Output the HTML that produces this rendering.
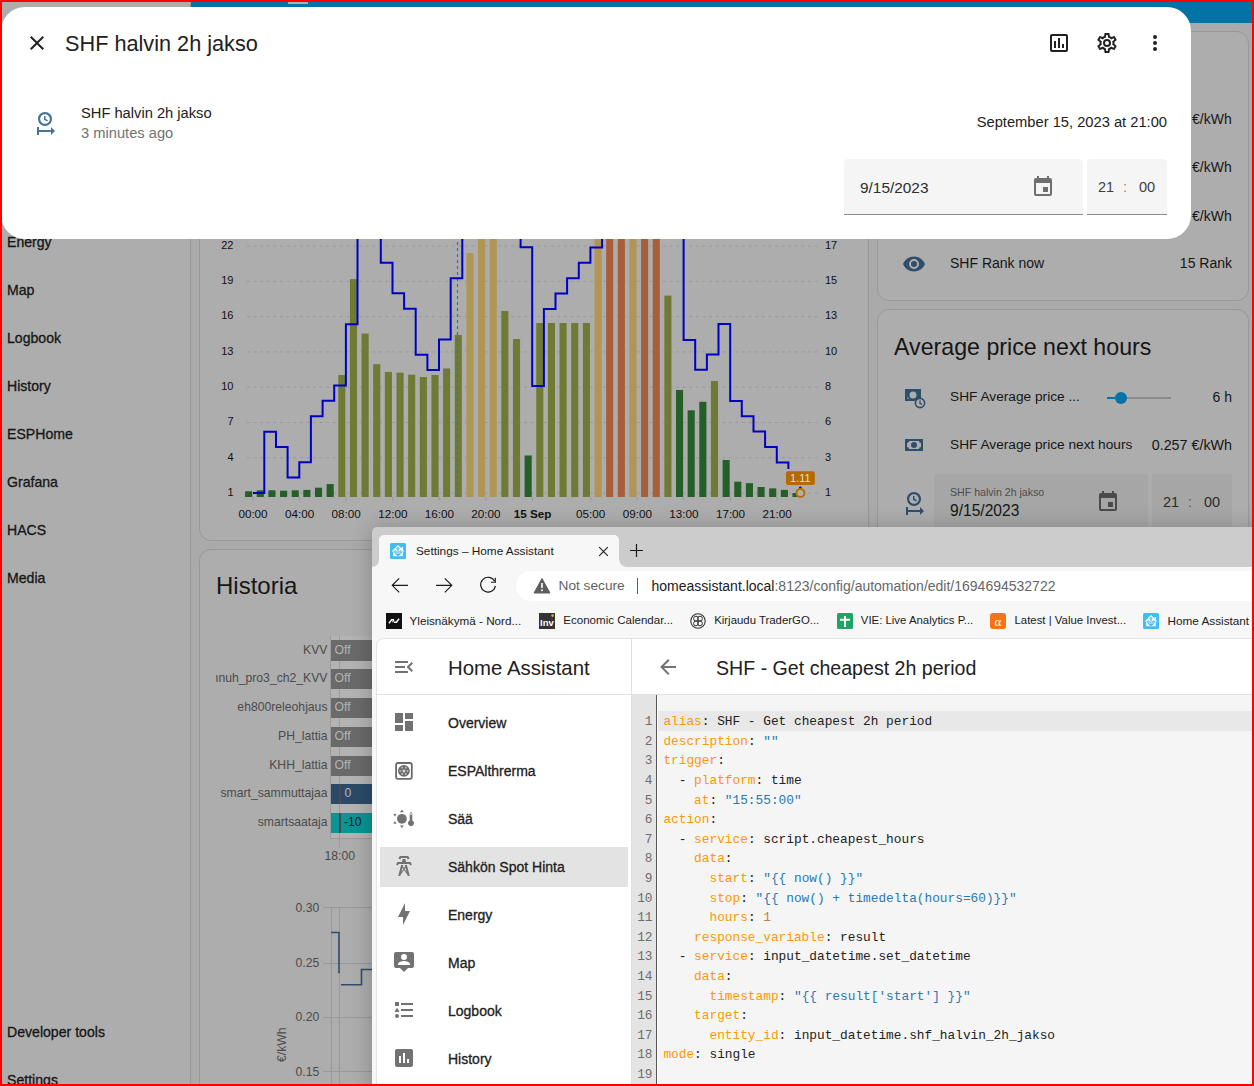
<!DOCTYPE html>
<html><head><meta charset="utf-8">
<style>
*{box-sizing:border-box}
html,body{margin:0;padding:0}
body{width:1254px;height:1086px;overflow:hidden;position:relative;background:#aaaaaa;font-family:"Liberation Sans",sans-serif;color:#161616}
.a{position:absolute}
.t{position:absolute;white-space:nowrap;line-height:1}
svg{display:block}
</style></head><body>
<!-- background HA (scrimmed colors) -->
<div class="a" style="left:0;top:0;width:1254px;height:1086px;background:#aaaaaa"></div>
<div class="a" style="left:0;top:0;width:190px;height:1086px;background:#adadad"></div>
<div class="a" style="left:190px;top:0;width:1px;height:1086px;background:#989898"></div>
<div class="a" style="left:191px;top:0;width:1063px;height:23px;background:#0273a6"></div>
<div class="a" style="left:288px;top:0;width:20px;height:4px;background:#9fb3bf"></div>
<!-- sidebar labels -->
<div class="t" style="left:7px;top:235px;font-size:14.1px;font-weight:400;-webkit-text-stroke:0.3px #161616">Energy</div>
<div class="t" style="left:7px;top:283px;font-size:14.1px;-webkit-text-stroke:0.3px #161616">Map</div>
<div class="t" style="left:7px;top:331px;font-size:14.1px;-webkit-text-stroke:0.3px #161616">Logbook</div>
<div class="t" style="left:7px;top:379px;font-size:14.1px;-webkit-text-stroke:0.3px #161616">History</div>
<div class="t" style="left:7px;top:427px;font-size:14.1px;-webkit-text-stroke:0.3px #161616">ESPHome</div>
<div class="t" style="left:7px;top:475px;font-size:14.1px;-webkit-text-stroke:0.3px #161616">Grafana</div>
<div class="t" style="left:7px;top:523px;font-size:14.1px;-webkit-text-stroke:0.3px #161616">HACS</div>
<div class="t" style="left:7px;top:571px;font-size:14.1px;-webkit-text-stroke:0.3px #161616">Media</div>
<div class="t" style="left:7px;top:1025px;font-size:14.1px;-webkit-text-stroke:0.3px #161616">Developer tools</div>
<div class="t" style="left:7px;top:1073px;font-size:14.1px;-webkit-text-stroke:0.3px #161616">Settings</div>
<!-- cards -->
<div class="a" style="left:199.4px;top:31px;width:669.6px;height:510px;border:1px solid #989898;border-radius:12px;background:#adadad"></div>
<div class="a" style="left:877px;top:31px;width:372px;height:270px;border:1px solid #989898;border-radius:12px;background:#adadad"></div>
<div class="a" style="left:877px;top:309px;width:372px;height:400px;border:1px solid #989898;border-radius:12px;background:#adadad"></div>
<div class="a" style="left:199.4px;top:549px;width:669.6px;height:700px;border:1px solid #989898;border-radius:12px;background:#adadad"></div>
<!-- right card rows -->
<div class="t" style="left:1192px;top:112.3px;font-size:14px">€/kWh</div>
<div class="t" style="left:1192px;top:160.3px;font-size:14px">€/kWh</div>
<div class="t" style="left:1192px;top:208.5px;font-size:14px">€/kWh</div>
<svg class="a" style="left:902px;top:252px" width="24" height="24" viewBox="0 0 24 24"><path fill="#2e4e6b" d="M12,9A3,3 0 0,0 9,12A3,3 0 0,0 12,15A3,3 0 0,0 15,12A3,3 0 0,0 12,9M12,17A5,5 0 0,1 7,12A5,5 0 0,1 12,7A5,5 0 0,1 17,12A5,5 0 0,1 12,17M12,4.5C7,4.5 2.73,7.61 1,12C2.73,16.39 7,19.5 12,19.5C17,19.5 21.27,16.39 23,12C21.27,7.61 17,4.5 12,4.5Z"/></svg>
<div class="t" style="left:950px;top:256px;font-size:14px">SHF Rank now</div>
<div class="t" style="right:22px;top:256px;font-size:14px">15 Rank</div>
<div class="t" style="left:894px;top:336px;font-size:23.2px">Average price next hours</div>
<!-- avg price rows -->
<svg class="a" style="left:902px;top:385px" width="24" height="24" viewBox="0 0 24 24"><path fill="#2e4e6b" d="M3,4H19V13.2A6.5,6.5 0 0,0 13.3,16H3V4M11,6.5A3.5,3.5 0 0,0 7.5,10A3.5,3.5 0 0,0 11,13.5A3.5,3.5 0 0,0 14.5,10A3.5,3.5 0 0,0 11,6.5M5.5,6V14H7.2A5,5 0 0,1 5.5,10.5V6Z"/><circle cx="18" cy="18" r="4.6" fill="none" stroke="#2e4e6b" stroke-width="1.6"/><path d="M18,15.5V18.3L19.8,19.4" stroke="#2e4e6b" stroke-width="1.3" fill="none"/></svg>
<div class="t" style="left:950px;top:390px;font-size:13.7px">SHF Average price ...</div>
<div class="a" style="left:1107px;top:396.5px;width:64px;height:2px;background:#8c8c8c"></div>
<div class="a" style="left:1107px;top:396.5px;width:14px;height:2px;background:#0273a6"></div>
<div class="a" style="left:1115px;top:391.5px;width:12px;height:12px;border-radius:6px;background:#0273a6"></div>
<div class="t" style="right:22px;top:390px;font-size:14px">6 h</div>
<svg class="a" style="left:902px;top:433px" width="24" height="24" viewBox="0 0 24 24"><path fill="#2e4e6b" fill-rule="evenodd" d="M3,6H21V18H3V6M12,9A3,3 0 0,1 15,12A3,3 0 0,1 12,15A3,3 0 0,1 9,12A3,3 0 0,1 12,9M7,8A2,2 0 0,1 5,10V14A2,2 0 0,1 7,16H17A2,2 0 0,1 19,14V10A2,2 0 0,1 17,8H7Z"/></svg>
<div class="t" style="left:950px;top:438px;font-size:13.7px">SHF Average price next hours</div>
<div class="t" style="right:22px;top:438px;font-size:14.3px">0.257 €/kWh</div>
<svg class="a" style="left:902px;top:490.5px" width="24" height="24" viewBox="0 0 24 24"><path fill="#2e4e6b" d="M12,1C8.14,1 5,4.14 5,8A7,7 0 0,0 12,15C15.86,15 19,11.87 19,8C19,4.14 15.86,1 12,1M12,3.15C14.67,3.15 16.850,5.32 16.85,8C16.85,10.68 14.67,12.85 12,12.85A4.85,4.85 0 0,1 7.15,8A4.85,4.85 0 0,1 12,3.15M11,5V8.69L14.19,10.53L14.94,9.23L12.5,7.82V5M4,16V24H6V21H18V24L22,20L18,16V19H6V16"/></svg>
<div class="a" style="left:934px;top:474px;width:213.5px;height:60px;background:#a6a6a6;border-radius:4px 4px 0 0"></div>
<div class="t" style="left:950px;top:487px;font-size:10.6px;color:#4d4d4d">SHF halvin 2h jakso</div>
<div class="t" style="left:950px;top:502.5px;font-size:15.6px;color:#161616">9/15/2023</div>
<svg class="a" style="left:1096px;top:490px" width="24" height="24" viewBox="0 0 24 24"><path fill="#4b4b4b" d="M19,19H5V8H19M16,1V3H8V1H6V3H5C3.89,3 3,3.89 3,5V19A2,2 0 0,0 5,21H19A2,2 0 0,0 21,19V5C21,3.89 20.1,3 19,3H18V1M17,12H12V17H17V12Z"/></svg>
<div class="a" style="left:1152px;top:474px;width:80px;height:60px;background:#a6a6a6;border-radius:4px 4px 0 0"></div>
<div class="t" style="left:1163px;top:494.5px;font-size:14.5px;color:#2b2b2b">21</div>
<div class="t" style="left:1188px;top:494.5px;font-size:14.5px;color:#5e5e5e">:</div>
<div class="t" style="left:1204px;top:494.5px;font-size:14.5px;color:#2b2b2b">00</div>
<svg class="a" style="left:200px;top:230px" width="680" height="310" viewBox="200 230 680 310">
<line x1="247" y1="246.0" x2="818" y2="246.0" stroke="#999" stroke-width="1" stroke-dasharray="3,3.6"/>
<line x1="247" y1="281.3" x2="818" y2="281.3" stroke="#999" stroke-width="1" stroke-dasharray="3,3.6"/>
<line x1="247" y1="316.6" x2="818" y2="316.6" stroke="#999" stroke-width="1" stroke-dasharray="3,3.6"/>
<line x1="247" y1="351.9" x2="818" y2="351.9" stroke="#999" stroke-width="1" stroke-dasharray="3,3.6"/>
<line x1="247" y1="387.2" x2="818" y2="387.2" stroke="#999" stroke-width="1" stroke-dasharray="3,3.6"/>
<line x1="247" y1="422.5" x2="818" y2="422.5" stroke="#999" stroke-width="1" stroke-dasharray="3,3.6"/>
<line x1="247" y1="457.8" x2="818" y2="457.8" stroke="#999" stroke-width="1" stroke-dasharray="3,3.6"/>
<line x1="247" y1="493.2" x2="818" y2="493.2" stroke="#999" stroke-width="1" stroke-dasharray="3,3.6"/>
<line x1="253.0" y1="497" x2="253.0" y2="501" stroke="#999" stroke-width="1"/>
<line x1="299.6" y1="497" x2="299.6" y2="501" stroke="#999" stroke-width="1"/>
<line x1="346.2" y1="497" x2="346.2" y2="501" stroke="#999" stroke-width="1"/>
<line x1="392.8" y1="497" x2="392.8" y2="501" stroke="#999" stroke-width="1"/>
<line x1="439.3" y1="497" x2="439.3" y2="501" stroke="#999" stroke-width="1"/>
<line x1="485.9" y1="497" x2="485.9" y2="501" stroke="#999" stroke-width="1"/>
<line x1="532.5" y1="497" x2="532.5" y2="501" stroke="#999" stroke-width="1"/>
<line x1="590.7" y1="497" x2="590.7" y2="501" stroke="#999" stroke-width="1"/>
<line x1="637.3" y1="497" x2="637.3" y2="501" stroke="#999" stroke-width="1"/>
<line x1="683.9" y1="497" x2="683.9" y2="501" stroke="#999" stroke-width="1"/>
<line x1="730.5" y1="497" x2="730.5" y2="501" stroke="#999" stroke-width="1"/>
<line x1="777.1" y1="497" x2="777.1" y2="501" stroke="#999" stroke-width="1"/>
<rect x="245.10" y="491.3" width="7.1" height="5.7" fill="#235f27"/>
<rect x="256.75" y="490.3" width="7.1" height="6.7" fill="#235f27"/>
<rect x="268.39" y="490.3" width="7.1" height="6.7" fill="#235f27"/>
<rect x="280.04" y="490.7" width="7.1" height="6.3" fill="#235f27"/>
<rect x="291.68" y="490.3" width="7.1" height="6.7" fill="#235f27"/>
<rect x="303.33" y="489.9" width="7.1" height="7.1" fill="#235f27"/>
<rect x="314.98" y="487.7" width="7.1" height="9.3" fill="#235f27"/>
<rect x="326.62" y="484.1" width="7.1" height="12.9" fill="#235f27"/>
<rect x="338.27" y="375" width="7.1" height="122.0" fill="#6f7a34"/>
<rect x="349.91" y="279.1" width="7.1" height="217.9" fill="#6f7a34"/>
<rect x="361.56" y="333.6" width="7.1" height="163.4" fill="#6f7a34"/>
<rect x="373.21" y="364.2" width="7.1" height="132.8" fill="#6f7a34"/>
<rect x="384.85" y="371.9" width="7.1" height="125.1" fill="#6f7a34"/>
<rect x="396.50" y="372.7" width="7.1" height="124.3" fill="#6f7a34"/>
<rect x="408.14" y="374.7" width="7.1" height="122.3" fill="#6f7a34"/>
<rect x="419.79" y="377" width="7.1" height="120.0" fill="#6f7a34"/>
<rect x="431.44" y="375" width="7.1" height="122.0" fill="#6f7a34"/>
<rect x="443.08" y="368.5" width="7.1" height="128.5" fill="#6f7a34"/>
<rect x="454.73" y="335" width="7.1" height="162.0" fill="#6f7a34"/>
<rect x="466.37" y="253" width="7.1" height="244.0" fill="#b09655"/>
<rect x="478.02" y="200" width="7.1" height="297.0" fill="#b09655"/>
<rect x="489.67" y="200" width="7.1" height="297.0" fill="#b09655"/>
<rect x="501.31" y="311" width="7.1" height="186.0" fill="#6f7a34"/>
<rect x="512.96" y="339" width="7.1" height="158.0" fill="#6f7a34"/>
<rect x="524.60" y="455.5" width="7.1" height="41.5" fill="#235f27"/>
<rect x="536.25" y="323" width="7.1" height="174.0" fill="#6f7a34"/>
<rect x="547.90" y="323" width="7.1" height="174.0" fill="#6f7a34"/>
<rect x="559.54" y="323" width="7.1" height="174.0" fill="#6f7a34"/>
<rect x="571.19" y="323" width="7.1" height="174.0" fill="#6f7a34"/>
<rect x="582.83" y="323" width="7.1" height="174.0" fill="#6f7a34"/>
<rect x="594.48" y="200" width="7.1" height="297.0" fill="#b09655"/>
<rect x="606.13" y="200" width="7.1" height="297.0" fill="#a65f39"/>
<rect x="617.77" y="200" width="7.1" height="297.0" fill="#a65f39"/>
<rect x="629.42" y="200" width="7.1" height="297.0" fill="#b09655"/>
<rect x="641.06" y="200" width="7.1" height="297.0" fill="#a65f39"/>
<rect x="652.71" y="200" width="7.1" height="297.0" fill="#a65f39"/>
<rect x="664.36" y="295.6" width="7.1" height="201.4" fill="#6f7a34"/>
<rect x="676.00" y="390" width="7.1" height="107.0" fill="#235f27"/>
<rect x="687.65" y="410.3" width="7.1" height="86.7" fill="#235f27"/>
<rect x="699.29" y="401.8" width="7.1" height="95.2" fill="#235f27"/>
<rect x="710.94" y="381" width="7.1" height="116.0" fill="#6f7a34"/>
<rect x="722.59" y="460" width="7.1" height="37.0" fill="#235f27"/>
<rect x="734.23" y="481.7" width="7.1" height="15.3" fill="#235f27"/>
<rect x="745.88" y="483.2" width="7.1" height="13.8" fill="#235f27"/>
<rect x="757.52" y="487" width="7.1" height="10.0" fill="#235f27"/>
<rect x="769.17" y="488.4" width="7.1" height="8.6" fill="#235f27"/>
<rect x="780.82" y="489.9" width="7.1" height="7.1" fill="#235f27"/>
<rect x="792.46" y="493" width="7.1" height="4.0" fill="#235f27"/>
<line x1="457.5" y1="236" x2="457.5" y2="497" stroke="#1482aa" stroke-width="1.2" stroke-dasharray="3,3"/>
<path d="M253,493.1 H264.3 V431.8 H276.0 V446.9 H287.6 V477.5 H299.3 V462.3 H310.9 V416.3 H322.6 V400.8 H334.2 V385.5 H345.9 V324.2 H357.5 V200 H369.2 V200 H380.8 V262.7 H392.5 V293.2 H404.1 V308.7 H415.7 V354.7 H427.4 V369.9 H439.0 V339.4 H450.7 V278.2 H462.3 V200 H474.0 V200 H485.6 V200 H497.3 V200 H508.9 V200 H520.6 V247.3 H532.2 V385.9 H543.9 V309.1 H555.5 V293.6 H567.1 V278.2 H578.8 V262.7 H590.4 V247.5 H602.1 V200 H613.7 V200 H625.4 V200 H637.0 V200 H648.7 V200 H660.3 V200 H672.0 V200 H683.6 V339.9 H695.2 V369.8 H706.9 V354.6 H718.5 V324.1 H730.2 V400.9 H741.8 V416.3 H753.5 V431.5 H765.1 V447.0 H776.8 V462.6 H788.4 V469" fill="none" stroke="#0000c3" stroke-width="2" stroke-linejoin="miter"/>
<circle cx="800.3" cy="487.6" r="1.2" fill="#0000c3"/>
<circle cx="800.4" cy="493" r="4" fill="#b0b0b0" stroke="#b86e00" stroke-width="2"/>
<rect x="786" y="471.2" width="28.8" height="13.8" rx="2" fill="#b36b00"/>
<text x="800.4" y="482.3" font-size="11" fill="#dedede" text-anchor="middle" font-family="Liberation Sans">1.11</text>
<text x="233.5" y="248.7" font-size="11" fill="#111" text-anchor="end" font-family="Liberation Sans">22</text>
<text x="825" y="248.7" font-size="11" fill="#111" font-family="Liberation Sans">17</text>
<text x="233.5" y="284.0" font-size="11" fill="#111" text-anchor="end" font-family="Liberation Sans">19</text>
<text x="825" y="284.0" font-size="11" fill="#111" font-family="Liberation Sans">15</text>
<text x="233.5" y="319.3" font-size="11" fill="#111" text-anchor="end" font-family="Liberation Sans">16</text>
<text x="825" y="319.3" font-size="11" fill="#111" font-family="Liberation Sans">13</text>
<text x="233.5" y="354.6" font-size="11" fill="#111" text-anchor="end" font-family="Liberation Sans">13</text>
<text x="825" y="354.6" font-size="11" fill="#111" font-family="Liberation Sans">10</text>
<text x="233.5" y="389.9" font-size="11" fill="#111" text-anchor="end" font-family="Liberation Sans">10</text>
<text x="825" y="389.9" font-size="11" fill="#111" font-family="Liberation Sans">8</text>
<text x="233.5" y="425.2" font-size="11" fill="#111" text-anchor="end" font-family="Liberation Sans">7</text>
<text x="825" y="425.2" font-size="11" fill="#111" font-family="Liberation Sans">6</text>
<text x="233.5" y="460.5" font-size="11" fill="#111" text-anchor="end" font-family="Liberation Sans">4</text>
<text x="825" y="460.5" font-size="11" fill="#111" font-family="Liberation Sans">3</text>
<text x="233.5" y="495.9" font-size="11" fill="#111" text-anchor="end" font-family="Liberation Sans">1</text>
<text x="825" y="495.9" font-size="11" fill="#111" font-family="Liberation Sans">1</text>
<text x="253.0" y="518.1" font-size="11.7" fill="#111" text-anchor="middle" font-family="Liberation Sans">00:00</text>
<text x="299.6" y="518.1" font-size="11.7" fill="#111" text-anchor="middle" font-family="Liberation Sans">04:00</text>
<text x="346.2" y="518.1" font-size="11.7" fill="#111" text-anchor="middle" font-family="Liberation Sans">08:00</text>
<text x="392.8" y="518.1" font-size="11.7" fill="#111" text-anchor="middle" font-family="Liberation Sans">12:00</text>
<text x="439.3" y="518.1" font-size="11.7" fill="#111" text-anchor="middle" font-family="Liberation Sans">16:00</text>
<text x="485.9" y="518.1" font-size="11.7" fill="#111" text-anchor="middle" font-family="Liberation Sans">20:00</text>
<text x="532.5" y="518.1" font-size="11.7" font-weight="bold" fill="#111" text-anchor="middle" font-family="Liberation Sans">15 Sep</text>
<text x="590.7" y="518.1" font-size="11.7" fill="#111" text-anchor="middle" font-family="Liberation Sans">05:00</text>
<text x="637.3" y="518.1" font-size="11.7" fill="#111" text-anchor="middle" font-family="Liberation Sans">09:00</text>
<text x="683.9" y="518.1" font-size="11.7" fill="#111" text-anchor="middle" font-family="Liberation Sans">13:00</text>
<text x="730.5" y="518.1" font-size="11.7" fill="#111" text-anchor="middle" font-family="Liberation Sans">17:00</text>
<text x="777.1" y="518.1" font-size="11.7" fill="#111" text-anchor="middle" font-family="Liberation Sans">21:00</text>
</svg><div class="t" style="left:216px;top:574px;font-size:24px;color:#161616">Historia</div>
<div class="a" style="left:331px;top:636px;width:45px;height:202px;background:#b3b3b3"></div>
<div class="a" style="left:339px;top:636px;width:1px;height:212px;background:#9c9c9c"></div>
<div class="a" style="left:331px;top:640.3px;width:45px;height:20.4px;background:#6a6a6a"></div>
<div class="t" style="right:926.5px;top:643.5px;font-size:12.2px;color:#4b4b4b">KVV</div>
<div class="t" style="left:334.5px;top:643.5px;font-size:12.2px;color:#b4b4b4">Off</div>
<div class="a" style="left:331px;top:669.1px;width:45px;height:20.4px;background:#6a6a6a"></div>
<div class="a" style="left:216px;top:668px;width:111.5px;height:20px;overflow:hidden"><div class="t" style="right:0;top:4.3px;font-size:12.2px;color:#4b4b4b">jannuh_pro3_ch2_KVV</div></div>
<div class="t" style="left:334.5px;top:672.3px;font-size:12.2px;color:#b4b4b4">Off</div>
<div class="a" style="left:331px;top:697.9px;width:45px;height:20.4px;background:#6a6a6a"></div>
<div class="t" style="right:926.5px;top:701.1px;font-size:12.2px;color:#4b4b4b">eh800releohjaus</div>
<div class="t" style="left:334.5px;top:701.1px;font-size:12.2px;color:#b4b4b4">Off</div>
<div class="a" style="left:331px;top:726.7px;width:45px;height:20.4px;background:#6a6a6a"></div>
<div class="t" style="right:926.5px;top:729.9px;font-size:12.2px;color:#4b4b4b">PH_lattia</div>
<div class="t" style="left:334.5px;top:729.9px;font-size:12.2px;color:#b4b4b4">Off</div>
<div class="a" style="left:331px;top:755.5px;width:45px;height:20.4px;background:#6a6a6a"></div>
<div class="t" style="right:926.5px;top:758.7px;font-size:12.2px;color:#4b4b4b">KHH_lattia</div>
<div class="t" style="left:334.5px;top:758.7px;font-size:12.2px;color:#b4b4b4">Off</div>
<div class="a" style="left:331px;top:784.1px;width:45px;height:20.4px;background:#2b4a6a"></div>
<div class="t" style="right:926.5px;top:787.3px;font-size:12.2px;color:#4b4b4b">smart_sammuttajaa</div>
<div class="a" style="left:338.5px;top:784.1px;width:2px;height:20.4px;background:#4a4a4a"></div>
<div class="t" style="left:344.5px;top:787.3px;font-size:12.2px;color:#b4b4b4">0</div>
<div class="a" style="left:331px;top:813.0px;width:45px;height:20.4px;background:#079595"></div>
<div class="t" style="right:926.5px;top:816.2px;font-size:12.2px;color:#4b4b4b">smartsaataja</div>
<div class="a" style="left:338.5px;top:813.0px;width:2px;height:20.4px;background:#4a4a4a"></div>
<div class="t" style="left:344px;top:816.2px;font-size:12.2px;color:#161616">-10</div>
<div class="a" style="left:330px;top:636px;width:1px;height:202px;background:#9a9a9a"></div>

<div class="a" style="left:330px;top:837.5px;width:46px;height:1px;background:#9a9a9a"></div>
<div class="t" style="left:324.5px;top:850px;font-size:12.2px;color:#4b4b4b">18:00</div>
<div class="a" style="left:322.6px;top:907px;width:50px;height:1px;background:#999"></div>
<div class="t" style="right:934.7px;top:901.8px;font-size:12.2px;color:#4b4b4b">0.30</div>
<div class="a" style="left:322.6px;top:962.5px;width:50px;height:1px;background:#999"></div>
<div class="t" style="right:934.7px;top:957.3px;font-size:12.2px;color:#4b4b4b">0.25</div>
<div class="a" style="left:322.6px;top:1016.5px;width:50px;height:1px;background:#999"></div>
<div class="t" style="right:934.7px;top:1011.3px;font-size:12.2px;color:#4b4b4b">0.20</div>
<div class="a" style="left:322.6px;top:1071px;width:50px;height:1px;background:#999"></div>
<div class="t" style="right:934.7px;top:1065.8px;font-size:12.2px;color:#4b4b4b">0.15</div>
<div class="a" style="left:330.5px;top:907px;width:1px;height:180px;background:#999"></div>
<div class="a" style="left:339px;top:907px;width:1px;height:180px;background:#999"></div>
<svg class="a" style="left:320px;top:900px" width="60" height="100" viewBox="320 900 60 100"><path d="M331,932.5 H339 V973.3 M341,984.8 H361.5 V969.5 H376" fill="none" stroke="#2e4e6b" stroke-width="1.6"/></svg>
<div class="t" style="left:260.5px;top:1035px;font-size:12.2px;color:#4b4b4b;transform:rotate(-90deg);transform-origin:21px 6px">€/kWh</div>

<!-- dialog -->
<div class="a" style="left:1px;top:7px;width:1190px;height:232px;background:#fff;border-radius:24px"></div>
<svg class="a" style="left:25px;top:31px" width="24" height="24" viewBox="0 0 24 24"><path fill="#212121" d="M19,6.41L17.59,5L12,10.59L6.41,5L5,6.41L10.59,12L5,17.59L6.41,19L12,13.41L17.59,19L19,17.59L13.41,12L19,6.41Z"/></svg>
<div class="t" style="left:65px;top:33px;font-size:21.7px;color:#212121">SHF halvin 2h jakso</div>
<svg class="a" style="left:1047px;top:31px" width="24" height="24" viewBox="0 0 24 24"><path fill="#212121" d="M9 17H7V10H9V17M13 17H11V7H13V17M17 17H15V13H17V17M19 19H5V5H19V19.1M19 3H5C3.9 3 3 3.9 3 5V19C3 20.1 3.9 21 5 21H19C20.1 21 21 20.1 21 19V5C21 3.9 20.1 3 19 3Z"/></svg>
<svg class="a" style="left:1095px;top:31px" width="24" height="24" viewBox="0 0 24 24"><path fill="#212121" d="M12,8A4,4 0 0,1 16,12A4,4 0 0,1 12,16A4,4 0 0,1 8,12A4,4 0 0,1 12,8M12,10A2,2 0 0,0 10,12A2,2 0 0,0 12,14A2,2 0 0,0 14,12A2,2 0 0,0 12,10M10,22C9.75,22 9.54,21.82 9.5,21.58L9.13,18.93C8.5,18.68 7.96,18.34 7.44,17.94L4.95,18.95C4.73,19.03 4.46,18.95 4.34,18.73L2.34,15.27C2.21,15.05 2.27,14.78 2.46,14.63L4.57,12.97L4.5,12L4.57,11L2.460,9.37C2.27,9.22 2.21,8.95 2.34,8.73L4.34,5.27C4.46,5.05 4.73,4.96 4.95,5.05L7.44,6.05C7.96,5.66 8.5,5.32 9.13,5.07L9.5,2.42C9.54,2.18 9.75,2 10,2H14C14.25,2 14.46,2.18 14.5,2.42L14.87,5.07C15.5,5.32 16.04,5.66 16.56,6.05L19.05,5.05C19.27,4.96 19.54,5.05 19.66,5.27L21.66,8.73C21.79,8.95 21.73,9.22 21.54,9.37L19.43,11L19.5,12L19.43,13L21.54,14.63C21.73,14.78 21.79,15.05 21.66,15.27L19.66,18.73C19.54,18.95 19.27,19.04 19.05,18.95L16.56,17.95C16.04,18.34 15.5,18.68 14.87,18.93L14.5,21.58C14.46,21.82 14.25,22 14,22H10M11.25,4L10.88,6.61C9.68,6.86 8.62,7.5 7.85,8.39L5.44,7.35L4.69,8.65L6.8,10.2C6.4,11.37 6.4,12.64 6.8,13.8L4.68,15.36L5.43,16.66L7.86,15.62C8.63,16.5 9.68,17.14 10.87,17.38L11.24,20H12.76L13.13,17.39C14.32,17.14 15.37,16.5 16.140,15.62L18.57,16.66L19.32,15.36L17.2,13.81C17.6,12.64 17.6,11.37 17.2,10.2L19.31,8.65L18.56,7.35L16.15,8.39C15.38,7.5 14.32,6.86 13.12,6.62L12.75,4H11.25Z"/></svg>
<svg class="a" style="left:1143px;top:31px" width="24" height="24" viewBox="0 0 24 24"><path fill="#212121" d="M12,16A2,2 0 0,1 14,18A2,2 0 0,1 12,20A2,2 0 0,1 10,18A2,2 0 0,1 12,16M12,10A2,2 0 0,1 14,12A2,2 0 0,1 12,14A2,2 0 0,1 10,12A2,2 0 0,1 12,10M12,4A2,2 0 0,1 14,6A2,2 0 0,1 12,8A2,2 0 0,1 10,6A2,2 0 0,1 12,4Z"/></svg>
<svg class="a" style="left:33px;top:111px" width="24" height="24" viewBox="0 0 24 24"><path fill="#44739e" d="M12,1C8.14,1 5,4.14 5,8A7,7 0 0,0 12,15C15.86,15 19,11.87 19,8C19,4.14 15.86,1 12,1M12,3.15C14.67,3.15 16.85,5.32 16.85,8C16.85,10.68 14.67,12.85 12,12.85A4.85,4.85 0 0,1 7.15,8A4.85,4.85 0 0,1 12,3.15M11,5V8.69L14.19,10.53L14.94,9.23L12.5,7.820V5M4,16V24H6V21H18V24L22,20L18,16V19H6V16"/></svg>
<div class="t" style="left:81px;top:106px;font-size:14.7px;color:#212121">SHF halvin 2h jakso</div>
<div class="t" style="left:81px;top:126px;font-size:14.7px;color:#727272">3 minutes ago</div>
<div class="t" style="right:87px;top:115px;font-size:14.7px;color:#212121">September 15, 2023 at 21:00</div>
<div class="a" style="left:844px;top:159px;width:239px;height:56px;background:#f5f5f5;border-radius:4px 4px 0 0;border-bottom:1px solid #8c8c8c"></div>
<div class="t" style="left:860px;top:179.5px;font-size:15.4px;color:#2e2e2e">9/15/2023</div>
<svg class="a" style="left:1031px;top:175px" width="24" height="24" viewBox="0 0 24 24"><path fill="#6f6f6f" d="M19,19H5V8H19M16,1V3H8V1H6V3H5C3.89,3 3,3.89 3,5V19A2,2 0 0,0 5,21H19A2,2 0 0,0 21,19V5C21,3.89 20.1,3 19,3H18V1M17,12H12V17H17V12Z"/></svg>
<div class="a" style="left:1087px;top:159px;width:80px;height:56px;background:#f5f5f5;border-radius:4px 4px 0 0;border-bottom:1px solid #8c8c8c"></div>
<div class="t" style="left:1098px;top:180px;font-size:14.5px;color:#404040">21</div>
<div class="t" style="left:1123px;top:180px;font-size:14.5px;color:#8a8a8a">:</div>
<div class="t" style="left:1139px;top:180px;font-size:14.5px;color:#404040">00</div>
<!-- browser window -->
<div class="a" style="left:372px;top:527px;width:890px;height:570px;background:#cccccc;border-radius:5px 0 0 0;overflow:hidden;box-shadow:0 2px 22px rgba(0,0,0,.24)">
</div>
<!-- active tab -->
<div class="a" style="left:379px;top:535px;width:240px;height:40px;background:#f7f7f7;border-radius:5px 5px 0 0"></div>
<div class="a" style="left:372px;top:558px;width:7px;height:9px;background:#f7f7f7"></div>
<div class="a" style="left:372px;top:558px;width:7px;height:8.5px;background:#cccccc;border-radius:0 0 7px 0"></div>
<div class="a" style="left:619px;top:558px;width:8px;height:9px;background:#f7f7f7"></div>
<div class="a" style="left:619px;top:558px;width:8px;height:8.5px;background:#cccccc;border-radius:0 0 0 8px"></div>
<!-- HA favicon -->
<svg class="a" style="left:390px;top:543px" width="16" height="16" viewBox="0 0 16 16"><rect width="16" height="16" rx="1.5" fill="#41bdf5"/><path d="M8,2 L11.6,5.6 V4 H13 V7 L14.4,8.5 H12.8 V13.2 H3.2 V8.5 H1.6 Z" fill="#fff"/><path d="M8,6.4 V13.2 M5.4,9.4 Q5.8,11.6 8,12.4 M10.6,9.4 Q10.2,11.6 8,12.4" stroke="#41bdf5" stroke-width="1.1" fill="none"/><circle cx="8" cy="5.6" r="1.15" fill="#9ad8f7" stroke="#41bdf5" stroke-width="0.8"/><circle cx="5.3" cy="8.8" r="1.15" fill="#9ad8f7" stroke="#41bdf5" stroke-width="0.8"/><circle cx="10.7" cy="8.8" r="1.15" fill="#9ad8f7" stroke="#41bdf5" stroke-width="0.8"/></svg>
<div class="t" style="left:416px;top:545.5px;font-size:11.8px;color:#1a1a1a">Settings – Home Assistant</div>
<svg class="a" style="left:597px;top:545px" width="13" height="13" viewBox="0 0 13 13"><path d="M2.2,2.2 L10.8,10.8 M10.8,2.2 L2.2,10.8" stroke="#1a1a1a" stroke-width="1.1"/></svg>
<svg class="a" style="left:629px;top:543px" width="15" height="15" viewBox="0 0 15 15"><path d="M7.5,1 V14 M1,7.5 H14" stroke="#1a1a1a" stroke-width="1.2"/></svg>
<!-- toolbar -->
<div class="a" style="left:372px;top:566.5px;width:890px;height:520px;background:#f7f7f7"></div>
<svg class="a" style="left:390px;top:575px" width="20" height="20" viewBox="0 0 20 20"><path d="M18,10.3 H2.6 M9.2,3.3 L2.2,10.3 L9.2,17.3" stroke="#1a1a1a" stroke-width="1.15" fill="none"/></svg>
<svg class="a" style="left:434px;top:575px" width="20" height="20" viewBox="0 0 20 20"><path d="M2,10.3 H17.4 M10.8,3.3 L17.8,10.3 L10.8,17.3" stroke="#1a1a1a" stroke-width="1.15" fill="none"/></svg>
<svg class="a" style="left:478px;top:575px" width="20" height="20" viewBox="0 0 20 20"><path d="M16.6,6.2 A7.4,7.4 0 1,0 17.4,10.8" stroke="#1a1a1a" stroke-width="1.15" fill="none"/><path d="M17.3,2.8 V7.2 H12.9" stroke="#1a1a1a" stroke-width="1.15" fill="none"/></svg>
<div class="a" style="left:516px;top:571px;width:760px;height:30px;background:#ffffff;border-radius:15px"></div>
<svg class="a" style="left:533px;top:577px" width="18" height="18" viewBox="0 0 18 18"><path d="M9,1.5 L17,16 H1 Z" fill="#5f5f5f" stroke="#5f5f5f" stroke-width="1" stroke-linejoin="round"/><path d="M9,6 V11" stroke="#fff" stroke-width="1.6"/><circle cx="9" cy="13.2" r="0.95" fill="#fff"/></svg>
<div class="t" style="left:558.5px;top:579px;font-size:13.7px;color:#5f5f5f">Not secure</div>
<div class="a" style="left:637px;top:578px;width:1px;height:16px;background:#5f5f5f"></div>
<div class="t" style="left:651.5px;top:579px;font-size:14px;color:#1a1a1a">homeassistant.local<span style="color:#666">:8123/config/automation/edit/1694694532722</span></div>
<!-- bookmarks -->
<svg class="a" style="left:386px;top:613px" width="16" height="16" viewBox="0 0 16 16"><rect width="16" height="16" fill="#111"/><path d="M3,10.2 L5.6,6.8 H8 M8,9.2 H10.4 L13,5.8" stroke="#fff" stroke-width="1.5" fill="none"/><path d="M8,6.8 L6.6,9.2" stroke="#fff" stroke-width="1.2"/></svg>
<div class="t" style="left:409.5px;top:614.5px;font-size:11.7px;color:#1a1a1a">Yleisnäkymä - Nord...</div>
<svg class="a" style="left:539px;top:613px" width="16" height="16" viewBox="0 0 16 16"><rect width="16" height="16" fill="#333"/><text x="1" y="12.5" font-size="9.5" font-weight="bold" fill="#fff" font-family="Liberation Sans">Inv</text><circle cx="13.6" cy="2.6" r="1.3" fill="#f5a623"/></svg>
<div class="t" style="left:563.3px;top:614.5px;font-size:11.55px;color:#1a1a1a">Economic Calendar...</div>
<svg class="a" style="left:690px;top:613px" width="16" height="16" viewBox="0 0 16 16"><circle cx="8" cy="8" r="7.2" stroke="#333" stroke-width="1.1" fill="none"/><circle cx="6" cy="5.6" r="2.4" stroke="#333" stroke-width="1" fill="none"/><circle cx="10" cy="5.6" r="2.4" stroke="#333" stroke-width="1" fill="none"/><circle cx="6" cy="10.4" r="2.4" stroke="#333" stroke-width="1" fill="none"/><circle cx="10" cy="10.4" r="2.4" stroke="#333" stroke-width="1" fill="none"/></svg>
<div class="t" style="left:714.2px;top:614.5px;font-size:11.4px;color:#1a1a1a">Kirjaudu TraderGO...</div>
<svg class="a" style="left:837px;top:613px" width="16" height="16" viewBox="0 0 16 16"><rect width="16" height="16" rx="1.5" fill="#1fa463"/><path d="M3,6.8 H13 M8,3 V14" stroke="#fff" stroke-width="2"/></svg>
<div class="t" style="left:860.8px;top:614.5px;font-size:11.4px;color:#1a1a1a">VIE: Live Analytics P...</div>
<svg class="a" style="left:990px;top:613px" width="16" height="16" viewBox="0 0 16 16"><rect width="16" height="16" rx="3" fill="#f97316"/><text x="8" y="12.8" font-size="13" fill="#fff" text-anchor="middle" font-family="Liberation Serif">α</text></svg>
<div class="t" style="left:1014.5px;top:614.5px;font-size:11.4px;color:#1a1a1a">Latest | Value Invest...</div>
<svg class="a" style="left:1143px;top:613px" width="16" height="16" viewBox="0 0 16 16"><rect width="16" height="16" rx="1.5" fill="#41bdf5"/><path d="M8,2 L11.6,5.6 V4 H13 V7 L14.4,8.5 H12.8 V13.2 H3.2 V8.5 H1.6 Z" fill="#fff"/><path d="M8,6.4 V13.2 M5.4,9.4 Q5.8,11.6 8,12.4 M10.6,9.4 Q10.2,11.6 8,12.4" stroke="#41bdf5" stroke-width="1.1" fill="none"/><circle cx="8" cy="5.6" r="1.15" fill="#9ad8f7" stroke="#41bdf5" stroke-width="0.8"/><circle cx="5.3" cy="8.8" r="1.15" fill="#9ad8f7" stroke="#41bdf5" stroke-width="0.8"/><circle cx="10.7" cy="8.8" r="1.15" fill="#9ad8f7" stroke="#41bdf5" stroke-width="0.8"/></svg>
<div class="t" style="left:1167.5px;top:614.5px;font-size:11.75px;color:#1a1a1a">Home Assistant</div>
<!-- page -->
<div class="a" style="left:375.5px;top:638px;width:900px;height:460px;background:#ffffff;border:1px solid #e3e3e3;border-radius:8px 0 0 0"></div>
<div class="a" style="left:376px;top:694px;width:878px;height:1px;background:#e0e0e0"></div>
<div class="a" style="left:631px;top:639px;width:1px;height:447px;background:#e0e0e0"></div>
<svg class="a" style="left:392px;top:655px" width="24" height="24" viewBox="0 0 24 24"><path fill="#727272"  d="M21,15.61L19.59,17L14.58,12L19.59,7L21,8.39L17.44,12L21,15.61M3,6H16V8H3V6M3,13V11H13V13H3M3,18V16H16V18H3Z"/></svg>
<div class="t" style="left:448px;top:657.5px;font-size:20.4px;color:#212121">Home Assistant</div>
<svg class="a" style="left:656px;top:655px" width="24" height="24" viewBox="0 0 24 24"><path fill="#727272"  d="M20,11V13H8L13.5,18.5L12.08,19.92L4.16,12L12.08,4.08L13.5,5.5L8,11H20Z"/></svg>
<div class="t" style="left:716px;top:659px;font-size:19.6px;color:#212121">SHF - Get cheapest 2h period</div>
<div class="a" style="left:380px;top:847px;width:248px;height:40px;background:#e3e3e3"></div>
<svg class="a" style="left:392px;top:710px" width="24" height="24" viewBox="0 0 24 24"><path fill="#727272"  d="M13,3V9H21V3M13,21H21V11H13M3,21H11V15H3M3,13H11V3H3V13Z"/></svg>
<div class="t" style="left:448px;top:716px;font-size:14px;color:#212121;-webkit-text-stroke:0.3px #212121">Overview</div>
<svg class="a" style="left:390px;top:756px" width="28" height="28" viewBox="390 756 28 28"><rect x="396.1" y="763" width="15.7" height="15.8" rx="1.8" fill="none" stroke="#6b6b6b" stroke-width="1.8"/><circle cx="403.9" cy="770.9" r="5.9" fill="#6b6b6b"/><circle cx="407.50" cy="770.90" r="0.95" fill="#c4c4c4"/><circle cx="405.70" cy="774.02" r="0.95" fill="#c4c4c4"/><circle cx="402.10" cy="774.02" r="0.95" fill="#c4c4c4"/><circle cx="400.30" cy="770.90" r="0.95" fill="#c4c4c4"/><circle cx="402.10" cy="767.78" r="0.95" fill="#c4c4c4"/><circle cx="405.70" cy="767.78" r="0.95" fill="#c4c4c4"/><circle cx="403.9" cy="770.9" r="1.5" fill="#e6e6e6" stroke="#8a8a8a" stroke-width="0.5"/></svg>
<div class="t" style="left:448px;top:764px;font-size:14px;color:#212121;-webkit-text-stroke:0.3px #212121">ESPAlthrerma</div>
<svg class="a" style="left:390px;top:804px" width="30" height="30" viewBox="390 804 30 30"><circle cx="401.9" cy="818.8" r="4.9" fill="#727272"/><path d="M401.9,809.6 L403.9,812.2 H399.9Z M401.9,828 L399.9,825.4 H403.9Z M393.3,814.1 L396.6,813.7 L395,816.6Z M393.3,823.5 L395,820.9 L396.6,823.9Z" fill="#727272"/><path d="M409.7,813.6 A1.3,1.3 0 0,1 412.3,813.6 V820.5 A3,3 0 1,1 409.7,820.5Z" fill="#727272"/><circle cx="411" cy="813.9" r="0.9" fill="#fff"/></svg>
<div class="t" style="left:448px;top:812px;font-size:14px;color:#212121;-webkit-text-stroke:0.3px #212121">Sää</div>
<svg class="a" style="left:392px;top:854px" width="24" height="24" viewBox="0 0 24 24"><path fill="#727272"  d="M8.28,5.45L6.5,4.55L7.76,2H16.24L17.5,4.55L15.72,5.44L15,4H9L8.28,5.45M18.62,8H14.09L13.3,5H10.7L9.910,8H5.38L4.1,10.55L5.89,11.44L6.62,10H17.38L18.1,11.45L19.89,10.56L18.62,8M17.77,22H15.7L15.46,21.1L12,15.9L8.53,21.1L8.3,22H6.23L9.12,11H11.19L10.83,12.35L12,14.1L13.16,12.35L12.81,11H14.88L17.77,22M11.4,15L10.5,13.65L9.32,18.13L11.4,15M14.68,18.12L13.5,13.64L12.6,15L14.68,18.12Z"/></svg>
<div class="t" style="left:448px;top:860px;font-size:14px;color:#212121;-webkit-text-stroke:0.3px #212121">Sähkön Spot Hinta</div>
<svg class="a" style="left:392px;top:902px" width="24" height="24" viewBox="0 0 24 24"><path fill="#727272"  d="M11 15H6L13 1V9H18L11 23V15Z"/></svg>
<div class="t" style="left:448px;top:908px;font-size:14px;color:#212121;-webkit-text-stroke:0.3px #212121">Energy</div>
<svg class="a" style="left:392px;top:950px" width="24" height="24" viewBox="0 0 24 24"><path fill="#727272" fill-rule="evenodd" d="M4,2H20A2,2 0 0,1 22,4V16A2,2 0 0,1 20,18H16L12,22L8,18H4A2,2 0 0,1 2,16V4A2,2 0 0,1 4,2M12,4A3,3 0 0,0 9,7A3,3 0 0,0 12,10A3,3 0 0,0 15,7A3,3 0 0,0 12,4M18,15V14C18,12 14,10.9 12,10.9C10,10.9 6,12 6,14V15H18Z"/></svg>
<div class="t" style="left:448px;top:956px;font-size:14px;color:#212121;-webkit-text-stroke:0.3px #212121">Map</div>
<svg class="a" style="left:392px;top:998px" width="24" height="24" viewBox="0 0 24 24"><path fill="#727272"  d="M5,9.5L7.5,14H2.5L5,9.5M3,4H7V8H3V4M5,20A2,2 0 0,0 7,18A2,2 0 0,0 5,16A2,2 0 0,0 3,18A2,2 0 0,0 5,20M9,5V7H21V5H9M9,19H21V17H9V19M9,13H21V11H9V13Z"/></svg>
<div class="t" style="left:448px;top:1004px;font-size:14px;color:#212121;-webkit-text-stroke:0.3px #212121">Logbook</div>
<svg class="a" style="left:392px;top:1046px" width="24" height="24" viewBox="0 0 24 24"><path fill="#727272" fill-rule="evenodd" d="M9 17H7V10H9V17M13 17H11V7H13V17M17 17H15V13H17V17M19 3H5C3.9 3 3 3.9 3 5V19C3 20.1 3.9 21 5 21H19C20.1 21 21 20.1 21 19V5C21 3.9 20.1 3 19 3Z"/></svg>
<div class="t" style="left:448px;top:1052px;font-size:14px;color:#212121;-webkit-text-stroke:0.3px #212121">History</div>
<div class="a" style="left:632px;top:695px;width:25px;height:391px;background:#e4e4e4"></div>
<div class="a" style="left:656px;top:695px;width:1.2px;height:391px;background:#555"></div>
<div class="a" style="left:657.5px;top:695px;width:600px;height:391px;background:#f5f5f5"></div>
<div class="a" style="left:657.5px;top:710.8px;width:600px;height:20px;background:#e8e8e8"></div>
<div class="t" style="right:601.5px;top:716.1px;font-family:'Liberation Mono',monospace;font-size:12.8px;color:#6d6d6d">1</div>
<div class="t" style="left:663.4px;top:716.1px;font-family:'Liberation Mono',monospace;font-size:12.8px;color:#222;white-space:pre"><span style="color:#ff9800">alias</span>: SHF - Get cheapest 2h period</div>
<div class="t" style="right:601.5px;top:735.7px;font-family:'Liberation Mono',monospace;font-size:12.8px;color:#6d6d6d">2</div>
<div class="t" style="left:663.4px;top:735.7px;font-family:'Liberation Mono',monospace;font-size:12.8px;color:#222;white-space:pre"><span style="color:#ff9800">description</span>: <span style="color:#2878b4">""</span></div>
<div class="t" style="right:601.5px;top:755.3px;font-family:'Liberation Mono',monospace;font-size:12.8px;color:#6d6d6d">3</div>
<div class="t" style="left:663.4px;top:755.3px;font-family:'Liberation Mono',monospace;font-size:12.8px;color:#222;white-space:pre"><span style="color:#ff9800">trigger</span>:</div>
<div class="t" style="right:601.5px;top:774.9px;font-family:'Liberation Mono',monospace;font-size:12.8px;color:#6d6d6d">4</div>
<div class="t" style="left:663.4px;top:774.9px;font-family:'Liberation Mono',monospace;font-size:12.8px;color:#222;white-space:pre">  - <span style="color:#ff9800">platform</span>: time</div>
<div class="t" style="right:601.5px;top:794.5px;font-family:'Liberation Mono',monospace;font-size:12.8px;color:#6d6d6d">5</div>
<div class="t" style="left:663.4px;top:794.5px;font-family:'Liberation Mono',monospace;font-size:12.8px;color:#222;white-space:pre">    <span style="color:#ff9800">at</span>: <span style="color:#2878b4">"15:55:00"</span></div>
<div class="t" style="right:601.5px;top:814.1px;font-family:'Liberation Mono',monospace;font-size:12.8px;color:#6d6d6d">6</div>
<div class="t" style="left:663.4px;top:814.1px;font-family:'Liberation Mono',monospace;font-size:12.8px;color:#222;white-space:pre"><span style="color:#ff9800">action</span>:</div>
<div class="t" style="right:601.5px;top:833.7px;font-family:'Liberation Mono',monospace;font-size:12.8px;color:#6d6d6d">7</div>
<div class="t" style="left:663.4px;top:833.7px;font-family:'Liberation Mono',monospace;font-size:12.8px;color:#222;white-space:pre">  - <span style="color:#ff9800">service</span>: script.cheapest_hours</div>
<div class="t" style="right:601.5px;top:853.3px;font-family:'Liberation Mono',monospace;font-size:12.8px;color:#6d6d6d">8</div>
<div class="t" style="left:663.4px;top:853.3px;font-family:'Liberation Mono',monospace;font-size:12.8px;color:#222;white-space:pre">    <span style="color:#ff9800">data</span>:</div>
<div class="t" style="right:601.5px;top:872.9px;font-family:'Liberation Mono',monospace;font-size:12.8px;color:#6d6d6d">9</div>
<div class="t" style="left:663.4px;top:872.9px;font-family:'Liberation Mono',monospace;font-size:12.8px;color:#222;white-space:pre">      <span style="color:#ff9800">start</span>: <span style="color:#2878b4">"{{ now() }}"</span></div>
<div class="t" style="right:601.5px;top:892.5px;font-family:'Liberation Mono',monospace;font-size:12.8px;color:#6d6d6d">10</div>
<div class="t" style="left:663.4px;top:892.5px;font-family:'Liberation Mono',monospace;font-size:12.8px;color:#222;white-space:pre">      <span style="color:#ff9800">stop</span>: <span style="color:#2878b4">"{{ now() + timedelta(hours=60)}}"</span></div>
<div class="t" style="right:601.5px;top:912.1px;font-family:'Liberation Mono',monospace;font-size:12.8px;color:#6d6d6d">11</div>
<div class="t" style="left:663.4px;top:912.1px;font-family:'Liberation Mono',monospace;font-size:12.8px;color:#222;white-space:pre">      <span style="color:#ff9800">hours</span>: <span style="color:#c8803c">1</span></div>
<div class="t" style="right:601.5px;top:931.7px;font-family:'Liberation Mono',monospace;font-size:12.8px;color:#6d6d6d">12</div>
<div class="t" style="left:663.4px;top:931.7px;font-family:'Liberation Mono',monospace;font-size:12.8px;color:#222;white-space:pre">    <span style="color:#ff9800">response_variable</span>: result</div>
<div class="t" style="right:601.5px;top:951.3px;font-family:'Liberation Mono',monospace;font-size:12.8px;color:#6d6d6d">13</div>
<div class="t" style="left:663.4px;top:951.3px;font-family:'Liberation Mono',monospace;font-size:12.8px;color:#222;white-space:pre">  - <span style="color:#ff9800">service</span>: input_datetime.set_datetime</div>
<div class="t" style="right:601.5px;top:970.9px;font-family:'Liberation Mono',monospace;font-size:12.8px;color:#6d6d6d">14</div>
<div class="t" style="left:663.4px;top:970.9px;font-family:'Liberation Mono',monospace;font-size:12.8px;color:#222;white-space:pre">    <span style="color:#ff9800">data</span>:</div>
<div class="t" style="right:601.5px;top:990.5px;font-family:'Liberation Mono',monospace;font-size:12.8px;color:#6d6d6d">15</div>
<div class="t" style="left:663.4px;top:990.5px;font-family:'Liberation Mono',monospace;font-size:12.8px;color:#222;white-space:pre">      <span style="color:#ff9800">timestamp</span>: <span style="color:#2878b4">"{{ result['start'] }}"</span></div>
<div class="t" style="right:601.5px;top:1010.1px;font-family:'Liberation Mono',monospace;font-size:12.8px;color:#6d6d6d">16</div>
<div class="t" style="left:663.4px;top:1010.1px;font-family:'Liberation Mono',monospace;font-size:12.8px;color:#222;white-space:pre">    <span style="color:#ff9800">target</span>:</div>
<div class="t" style="right:601.5px;top:1029.7px;font-family:'Liberation Mono',monospace;font-size:12.8px;color:#6d6d6d">17</div>
<div class="t" style="left:663.4px;top:1029.7px;font-family:'Liberation Mono',monospace;font-size:12.8px;color:#222;white-space:pre">      <span style="color:#ff9800">entity_id</span>: input_datetime.shf_halvin_2h_jakso</div>
<div class="t" style="right:601.5px;top:1049.3px;font-family:'Liberation Mono',monospace;font-size:12.8px;color:#6d6d6d">18</div>
<div class="t" style="left:663.4px;top:1049.3px;font-family:'Liberation Mono',monospace;font-size:12.8px;color:#222;white-space:pre"><span style="color:#ff9800">mode</span>: single</div>
<div class="t" style="right:601.5px;top:1068.9px;font-family:'Liberation Mono',monospace;font-size:12.8px;color:#6d6d6d">19</div>
<div class="t" style="left:663.4px;top:1068.9px;font-family:'Liberation Mono',monospace;font-size:12.8px;color:#222;white-space:pre"></div><div class="a" style="left:0;top:0;width:1254px;height:1086px;border:2px solid #ff0000;pointer-events:none"></div></body></html>
